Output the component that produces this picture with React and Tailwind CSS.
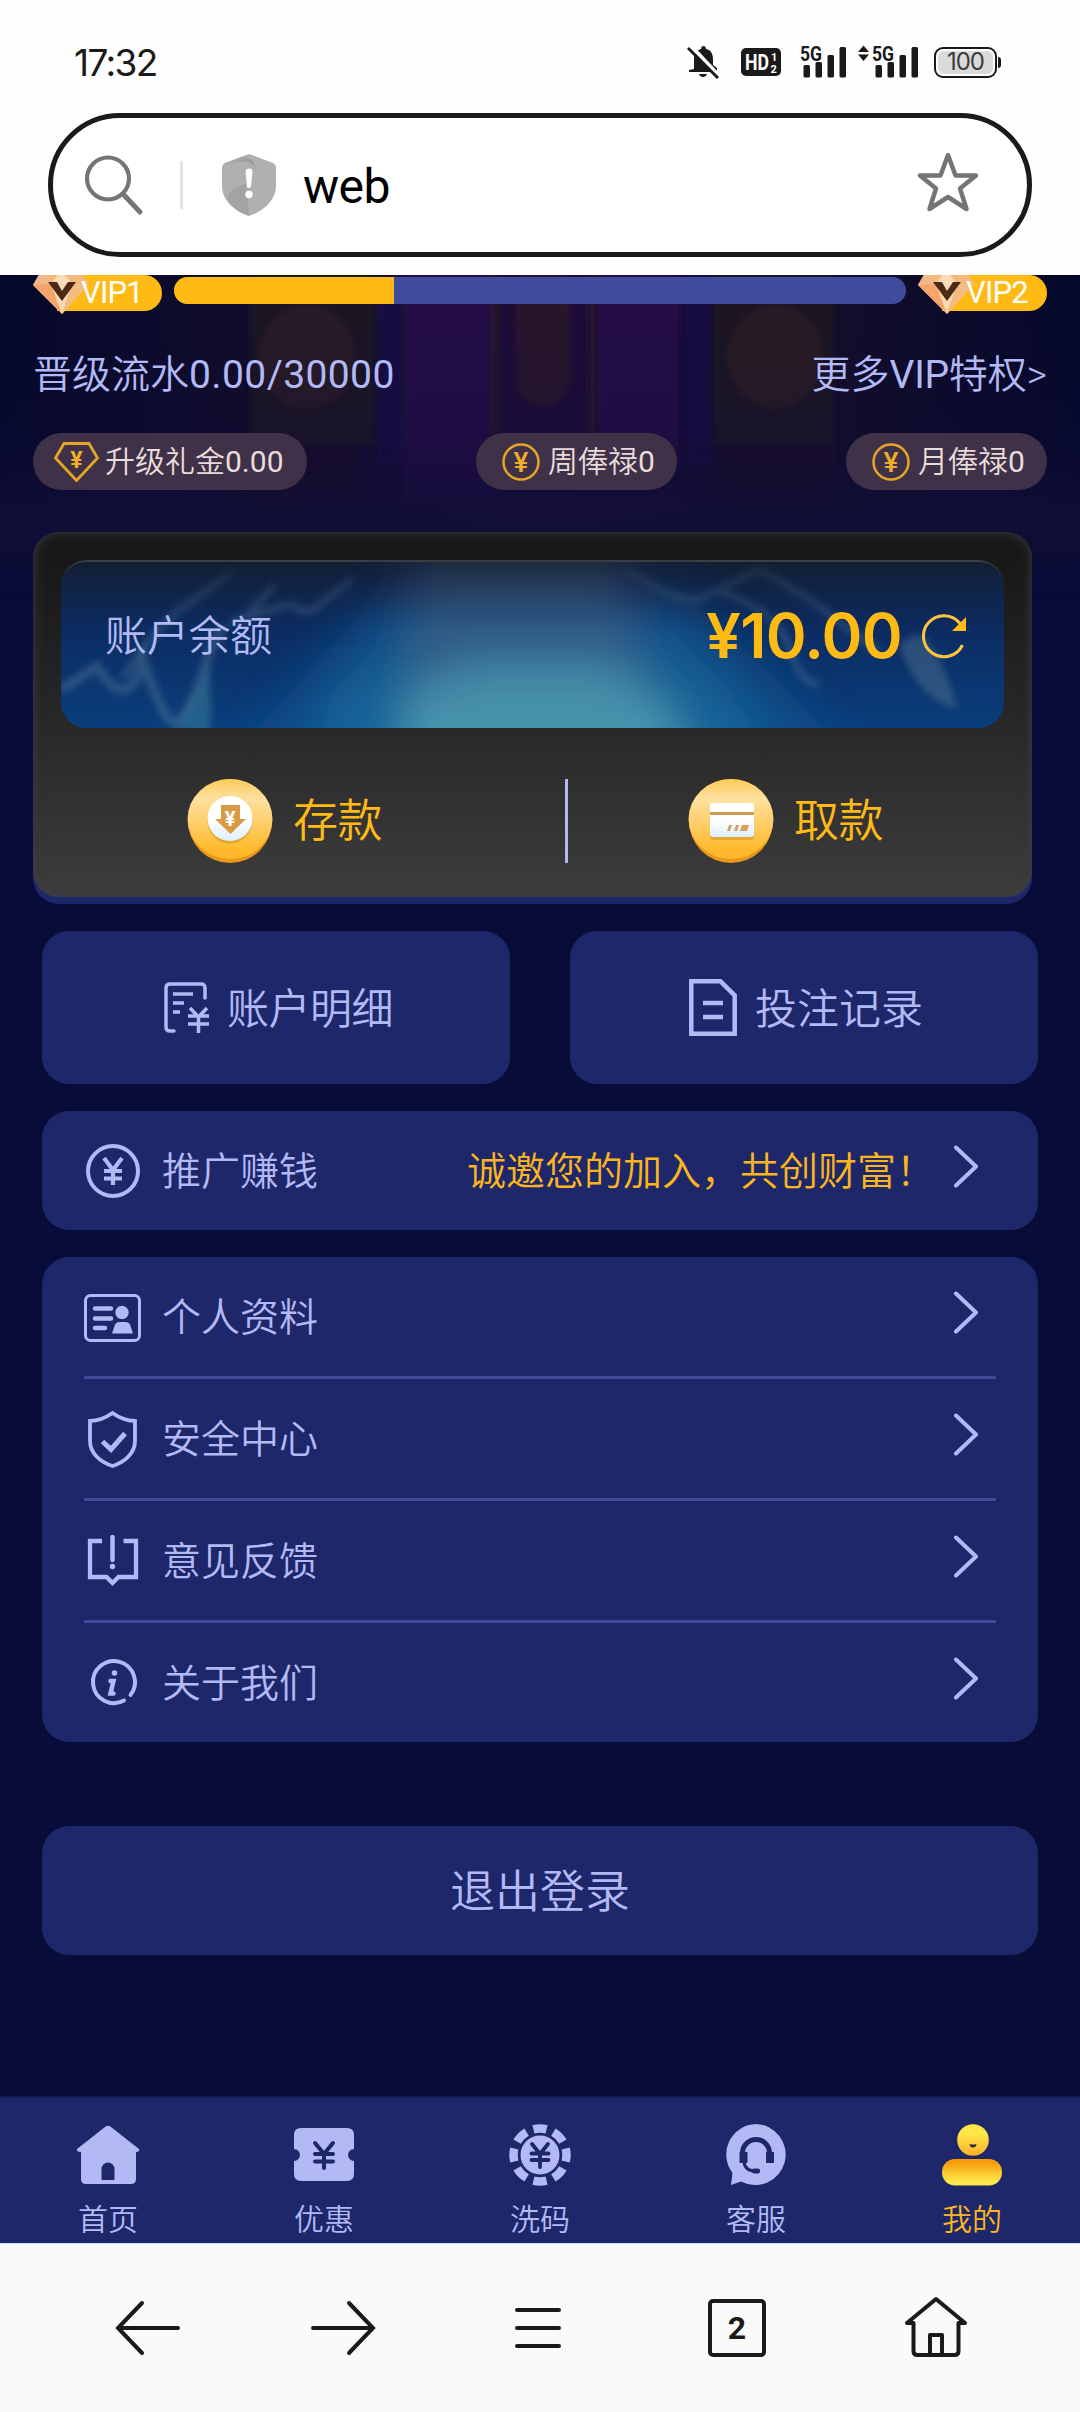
import React from "react";

const Yen = ({ x, y, size, weight = 400, fill = "#b2b9f5" }) => (
  <text x={x} y={y} textAnchor="middle" fontFamily="Roboto, sans-serif" fontSize={size} fontWeight={weight} fill={fill}>
    ¥
  </text>
);

const SignalBars = () => (
  <svg className="overflow-visible" width="48" height="44" viewBox="0 -5 48 44" fill="#1a1a1a">
    <text x="0" y="15.500" textLength="22" lengthAdjust="spacingAndGlyphs" fontFamily="Roboto, sans-serif" fontSize="21" fontWeight="700">5G</text>
    <rect x="3.500" y="20" width="6.500" height="12.500" rx="1.500" />
    <rect x="15.500" y="17" width="6.500" height="15.500" rx="1.500" />
    <rect x="27.500" y="10" width="6.500" height="22.500" rx="1.500" />
    <rect x="39.500" y="2" width="6.500" height="30.500" rx="1.500" />
  </svg>
);

const StatusBar = () => (
  <div className="h-[113px] flex items-start justify-between pl-[74px] pr-[79px] text-[#1a1a1a]">
    <span className="mt-[39px] font-['Inter'] text-[37px] leading-[48px] tracking-[-1.6px]">17:32</span>
    <div className="mt-[45px] h-[34px] flex items-center">
      <svg className="w-[32px]" height="34" viewBox="0 0 32 34">
        <path d="M7 24V14c0-5 3-9 7-10 0-4 5-4 5 0 5 1 7 5 7 10v6l4 3v4H2v-2z" fill="#1a1a1a" />
        <path d="M12 29h8c-1 4-7 4-8 0z" fill="#1a1a1a" />
        <path d="M4 1l28 30" stroke="#fefefe" strokeWidth="4" />
        <path d="M1 3l30 30" stroke="#1a1a1a" strokeWidth="3" />
      </svg>
      <svg className="ml-[22px]" width="40" height="28" viewBox="0 0 40 28">
        <rect width="40" height="28" rx="5" fill="#1a1a1a" />
        <g fill="#fff" fontFamily="Roboto, sans-serif" fontWeight="700">
          <text x="4" y="22" fontSize="22" textLength="24" lengthAdjust="spacingAndGlyphs">HD</text>
          <text x="30" y="12.500" fontSize="11">1</text>
          <text x="29.500" y="25" fontSize="11">2</text>
        </g>
      </svg>
      <div className="ml-[19px] flex"><SignalBars /></div>
      <svg className="ml-[10px]" width="11" height="34" viewBox="0 0 11 34" fill="#1a1a1a">
        <path d="M0 7l5.500-6.500L11 7zM0 9.500h11L5.500 16z" />
      </svg>
      <div className="ml-[3px] flex"><SignalBars /></div>
      <div className="ml-[14px] w-[63px] h-[31px] rounded-[9px] border-2 border-[#1a1a1a] p-[2px] flex">
        <div className="flex-1 rounded-[6px] bg-[#dadada] flex items-center justify-center font-['Inter'] text-[24px] leading-none tracking-[-1px] text-[#3c3c3c]">
          100
        </div>
      </div>
      <div className="ml-[1px] w-[3px] h-[11px] rounded-r bg-[#1a1a1a]"></div>
    </div>
  </div>
);

const UrlBar = () => (
  <div className="mx-[48px] h-[144px] rounded-full border-[5px] border-[#1a1a1a] bg-white flex items-center pl-[31px] pr-[48px]">
    <svg width="60" height="62" viewBox="0 0 60 62" fill="none" stroke="#757575" strokeWidth="4.200" strokeLinecap="round">
      <circle cx="24" cy="24.500" r="21" />
      <path d="M39 40l17 18" strokeWidth="5" />
    </svg>
    <div className="ml-[36px] w-[3px] h-[48px] bg-[#e4e4e4]"></div>
    <svg className="ml-[39px]" width="54" height="62" viewBox="0 0 54 62">
      <defs>
        <linearGradient id="sh1" x1="0" y1="0" x2="1" y2="0.300">
          <stop offset="0" stopColor="#b4b4b4" />
          <stop offset="1" stopColor="#989898" />
        </linearGradient>
      </defs>
      <path d="M24 1q3-1.500 6 0l21 8q3 1.500 3 5v18c0 14-12 25-27 30C12 57 0 46 0 32V14q0-3.500 3-5z" fill="#b0b0b0" />
      <path d="M3 9l18-6q11 0 12 11-4-8-16-6-10 2-16 5z" fill="url(#sh1)" />
      <path d="M5 45q5-14 19-15l3 32Q12 57 5 45z" fill="#a3a3a3" />
      <path d="M23.500 18a3.500 3.500 0 0 1 7 0l-1.500 14a2 2 0 0 1-4 0z" fill="#fff" />
      <circle cx="27" cy="40.500" r="3.700" fill="#fff" />
    </svg>
    <span className="ml-[27px] pt-[3px] flex-1 text-[48px] leading-[60px] tracking-[-0.5px] text-black">web</span>
    <svg className="-mt-[6px]" width="62" height="62" viewBox="0 0 62 62" fill="none" stroke="#757575" strokeWidth="4.500" strokeLinejoin="round">
      <path d="M31 4l7.500 20.500H59L43 37.500 49.500 58 31 46 12.500 58 19 37.500 3 24.500h20.500z" />
    </svg>
  </div>
);

const VipBadge = ({ label }) => (
  <div className="w-[129px] h-[36px] relative pl-[24px]">
    <div className="h-full rounded-r-full bg-[#ffba14] pl-[24px]">
      <span className="relative z-10 block font-normal text-[31px] leading-[36px] tracking-[-0.8px] text-white">{label}</span>
    </div>
    <svg className="absolute left-0 top-0" width="57" height="39" viewBox="0 0 57 39">
      <path d="M9-5h38l9 14-27 30L0 10z" fill="#f3b97e" />
      <path d="M8-4l10 13L0 10z" fill="#f0b98a" />
      <path d="M18 9L28-5l11 14z" fill="#fbdcb8" />
      <path d="M18 9L0 10l29 29z" fill="#f5a56a" />
      <path d="M18 9h21L29 39z" fill="#fbd9ae" />
      <path d="M39 9h17L29 39z" fill="#f1bd80" />
      <path d="M15 7h9l5 9 6-9h8L29 26z" fill="#4b2a18" />
    </svg>
  </div>
);

const Chip = ({ icon, label, amount }) => (
  <div className="h-[57px] rounded-full bg-[#3f3147] flex items-center">
    {icon}
    <span className="text-[30px] leading-[40px] text-[#e9dcdc]">
      {label}
      <span className="font-normal">{amount}</span>
    </span>
  </div>
);

const YenRing = () => (
  <svg className="ml-[26px] mr-[8px]" width="38" height="38" viewBox="0 0 38 38">
    <circle cx="19" cy="19" r="17.500" fill="none" stroke="#e5a526" strokeWidth="2.500" />
    <Yen x="19" y="29" size="28" weight={500} fill="#eeae28" />
  </svg>
);

const YenGem = () => (
  <svg className="ml-[21px] mr-[6px]" width="45" height="40" viewBox="0 0 45 40">
    <path d="M10 1.500h25L43.500 16 22.500 38.500 1.500 16z" fill="none" stroke="#e5a526" strokeWidth="2.800" />
    <Yen x="22.500" y="25.500" size="23" weight={700} fill="#eeae28" />
  </svg>
);

// faint hall scenery behind the vip header
const HeaderBackdrop = () => (
  <svg className="absolute left-0 top-0" width="1080" height="330" viewBox="0 0 1080 330">
    <defs>
      <linearGradient id="bgFade" x1="0" y1="0" x2="0" y2="1">
        <stop offset="0" stopColor="#070b33" stopOpacity="0" />
        <stop offset="0.450" stopColor="#0d0c36" stopOpacity="0.250" />
        <stop offset="0.750" stopColor="#110f37" stopOpacity="0.900" />
        <stop offset="1" stopColor="#070b38" stopOpacity="1" />
      </linearGradient>
      <linearGradient id="bgSide" x1="0" y1="0" x2="1" y2="0">
        <stop offset="0" stopColor="#05082b" />
        <stop offset="0.250" stopColor="#130d2c" />
        <stop offset="0.500" stopColor="#1e0d3c" />
        <stop offset="0.750" stopColor="#150e2a" />
        <stop offset="1" stopColor="#05082b" />
      </linearGradient>
      <filter id="haze"><feGaussianBlur stdDeviation="3" /></filter>
    </defs>
    <rect width="1080" height="330" fill="url(#bgSide)" />
    <g filter="url(#haze)">
      <rect x="250" y="-10" width="125" height="180" fill="#1d1222" />
      <ellipse cx="307" cy="82" rx="48" ry="52" fill="#291a25" />
      <rect x="378" y="-10" width="24" height="200" fill="#130a44" />
      <rect x="405" y="-10" width="90" height="240" fill="#25084a" />
      <rect x="490" y="-10" width="10" height="200" fill="#281228" />
      <rect x="516" y="-10" width="54" height="142" rx="26" fill="#2a1629" />
      <rect x="588" y="-10" width="8" height="200" fill="#2a1229" />
      <rect x="598" y="-10" width="80" height="200" fill="#25084a" />
      <rect x="686" y="-10" width="24" height="200" fill="#130a44" />
      <rect x="712" y="-10" width="122" height="180" fill="#1d1222" />
      <ellipse cx="775" cy="82" rx="48" ry="52" fill="#291c24" />
      <rect x="250" y="170" width="110" height="60" fill="#1a1026" />
      <rect x="720" y="170" width="115" height="60" fill="#1a1026" />
    </g>
    <rect width="1080" height="330" fill="url(#bgFade)" />
  </svg>
);

const BalancePanel = () => (
  <div className="relative h-[168px] rounded-[26px] overflow-hidden border-t-2 border-[#3a3d42] bg-[#0a3470]">
    <svg className="absolute inset-0" width="943" height="168" viewBox="0 0 943 168" preserveAspectRatio="none">
      <defs>
        <linearGradient id="pBase" x1="0" y1="0" x2="0" y2="1">
          <stop offset="0" stopColor="#0a1a42" />
          <stop offset="0.500" stopColor="#0a2f69" />
          <stop offset="1" stopColor="#0a3f7c" />
        </linearGradient>
        <linearGradient id="pTop" x1="0" y1="0" x2="0" y2="1">
          <stop offset="0" stopColor="#17202e" stopOpacity="0.700" />
          <stop offset="0.400" stopColor="#15305c" stopOpacity="0.150" />
          <stop offset="1" stopColor="#15305c" stopOpacity="0" />
        </linearGradient>
        <filter id="soft" x="-20%" y="-50%" width="140%" height="200%"><feGaussianBlur stdDeviation="3.500" /></filter>
        <filter id="softer" x="-50%" y="-50%" width="200%" height="200%"><feGaussianBlur stdDeviation="20" /></filter>
      </defs>
      <rect width="943" height="168" fill="url(#pBase)" />
      <g filter="url(#softer)">
        <path d="M160 210l70-80 90-100h300l90 80 90 100z" fill="#0d4f8a" opacity="0.900" />
        <path d="M250 210l20-80 70-60h270l60 60 50 80z" fill="#14699c" opacity="0.850" />
        <path d="M350 210V-20h210l20 130 30 100z" fill="#46688a" opacity="0.650" />
        <path d="M335 210l10-80 70-30h130l60 40 30 70z" fill="#4898b0" opacity="0.900" />
      </g>
      <g fill="none" stroke="#52789a" strokeOpacity="0.500" filter="url(#soft)">
        <path d="M0 128l36-24q14 24 26 24 14-2 20-30 20 60 32 64 16-10 34-70l14-28" strokeWidth="9" />
        <path d="M62 116q40-60 60-70l48-36" strokeWidth="6" />
        <path d="M180 60l34-38M170 60q30-10 60-18 14 12 24 4l38-30" strokeWidth="7" />
        <path d="M564 6q50 34 72 32 40-20 62-30 40 20 70 44l50 38" strokeWidth="6" />
        <path d="M660 30q60 20 70 60 10 32 28 32" strokeWidth="6" />
      </g>
      <path d="M838 84q20 56 58 62-14-52-34-72-12-4-24 10z" fill="#4a6c8c" opacity="0.600" filter="url(#soft)" />
      <path d="M114 168q16-20 34-68 4 50 0 74z" fill="#3d86a0" opacity="0.500" filter="url(#soft)" />
      <rect width="943" height="168" fill="url(#pTop)" />
    </svg>
    <div className="relative h-full flex items-center pl-[44px] pr-[37px] pb-[18px]">
      <span className="flex-1 pt-[2px] text-[42px] leading-[50px] tracking-[-0.3px] text-[#b2b9f5]">账户余额</span>
      <span className="font-['Inter'] font-semibold text-[62px] leading-[60px] tracking-[-0.7px] text-[#ffba14]">¥10.00</span>
      <svg className="ml-[19px]" width="46" height="46" viewBox="0 0 46 46">
        <path d="M41.500 32A20.500 20.500 0 1 1 39 10.500" fill="none" stroke="#ffc53a" strokeWidth="3" />
        <path d="M45 4v14H31z" fill="#ffba14" />
      </svg>
    </div>
  </div>
);

const Coin = ({ children }) => (
  <svg width="86" height="84" viewBox="0 0 86 84">
    <defs>
      <linearGradient id="coin" x1="0" y1="0" x2="0" y2="1">
        <stop offset="0" stopColor="#fdcb5a" />
        <stop offset="0.250" stopColor="#fde0a0" />
        <stop offset="0.900" stopColor="#ffb928" />
      </linearGradient>
      <linearGradient id="coinFace" x1="0" y1="0" x2="0" y2="1">
        <stop offset="0.500" stopColor="#ffffff" />
        <stop offset="1" stopColor="#dcefff" />
      </linearGradient>
    </defs>
    <circle cx="43" cy="42" r="42" fill="#e8981c" />
    <ellipse cx="43" cy="40" rx="42.500" ry="40" fill="url(#coin)" />
    {children}
  </svg>
);

const DepositIcon = () => (
  <Coin>
    <circle cx="43" cy="42" r="22.500" fill="#d9921f" opacity="0.600" />
    <circle cx="43" cy="39.500" r="22.500" fill="url(#coinFace)" />
    <path d="M34 26h19v14h6L43.500 55 28 40h6z" fill="#d89a45" />
    <Yen x="43" y="47" size="20" weight={700} fill="#fff" />
  </Coin>
);

const WithdrawIcon = () => (
  <Coin>
    <rect x="22" y="27" width="44" height="34" rx="4" fill="#d9921f" opacity="0.600" />
    <rect x="22" y="24" width="44" height="34" rx="3" fill="url(#coinFace)" />
    <rect x="22" y="33" width="44" height="3" fill="#cf9a50" />
    <path d="M41 46h3l-2 6h-3zM48 46h3l-2 6h-3zM54 46h7l-2 6h-7z" fill="#d9a05a" />
  </Coin>
);

const WalletCard = () => (
  <div className="ml-[33px] w-[999px] h-[372px] rounded-[26px] bg-[#1d276a]">
    <div className="h-[365px] rounded-[26px] px-[28px] pt-[28px] bg-linear-to-b from-[#161616] via-[#272727] to-[#3d3d3d] shadow-[inset_0_0_12px_#3c3e44]">
      <BalancePanel />
      <div className="h-[169px] mt-[8px] flex items-center">
        <div className="w-[504px] flex items-center pl-[126px]">
          <DepositIcon />
          <span className="ml-[20px] pt-[2px] text-[45px] leading-[50px] tracking-[-0.5px] text-[#ffba14]">存款</span>
        </div>
        <div className="w-[3px] h-[84px] bg-[#b2b9f5]"></div>
        <div className="flex-1 flex items-center pl-[120px]">
          <WithdrawIcon />
          <span className="ml-[20px] pt-[2px] text-[45px] leading-[50px] tracking-[-0.5px] text-[#ffba14]">取款</span>
        </div>
      </div>
    </div>
  </div>
);

const BillIcon = () => (
  <svg width="46" height="52" viewBox="0 0 46 52" fill="none" stroke="#b2b9f5" strokeWidth="3.500" strokeLinecap="round">
    <path d="M41 16V6q0-4-4-4H6Q2 2 2 6v39q0 4 4 4h4" />
    <path d="M9 12h20M9 21h11M9 30h7" strokeLinecap="butt" />
    <path d="M26 26l8.500 9L43 26M34.500 35v16M24 34h21M24 42h21" strokeLinecap="butt" />
  </svg>
);

const RecordIcon = () => (
  <svg width="48" height="57" viewBox="0 0 48 57" fill="none" stroke="#b2b9f5" strokeWidth="4.500">
    <path d="M2.300 2.300h29.200l14.200 14.200v38.200H2.300z" />
    <path d="M14 24h20M14 38h20" />
  </svg>
);

const PromoIcon = () => (
  <svg width="56" height="56" viewBox="0 0 56 56">
    <circle cx="28" cy="28" r="25" fill="none" stroke="#b2b9f5" strokeWidth="4" />
    <path d="M19 15l9 12 9-12M28 27v15M19 28h18M19 35.500h18" fill="none" stroke="#b2b9f5" strokeWidth="4.200" />
  </svg>
);

const ProfileIcon = () => (
  <svg width="57" height="56" viewBox="0 0 57 56">
    <rect x="1.500" y="6.500" width="54" height="45" rx="5" fill="none" stroke="#b2b9f5" strokeWidth="3" />
    <path d="M11 19.500h16M11 29.500h16M11 39h10" stroke="#b2b9f5" strokeWidth="4.500" strokeLinecap="round" />
    <circle cx="38" cy="23.500" r="6.700" fill="#b2b9f5" />
    <path d="M28 44.500l3-9q1-2.500 4-2.500h7q3 0 4 2.500l3 9z" fill="#b2b9f5" />
  </svg>
);

const SafeIcon = () => (
  <svg width="57" height="58" viewBox="0 0 57 58" fill="none" stroke="#b2b9f5" strokeWidth="3.800">
    <path d="M28.500 3Q18 10.500 6 11v20c0 12 10 21 22.500 25C41 52 51 43 51 31V11Q39 10.500 28.500 3z" />
    <path d="M18.500 31.500l8.500 8 14-16" strokeWidth="5" />
  </svg>
);

const FeedbackIcon = () => (
  <svg width="57" height="56" viewBox="0 0 57 56" fill="none" stroke="#b2b9f5" strokeWidth="4.300">
    <path d="M18 8H6v36h16.500l6 6 6-6H52V8H39.500" />
    <path d="M28.500 4v23" strokeWidth="4.500" strokeLinecap="round" />
    <circle cx="28.500" cy="33.500" r="2.700" fill="#b2b9f5" stroke="none" />
  </svg>
);

const AboutIcon = () => (
  <svg width="57" height="56" viewBox="0 0 57 56" fill="none" stroke="#b2b9f5" strokeWidth="4" strokeLinecap="round">
    <path d="M40 45.500A21 21 0 1 1 46.500 40" />
    <circle cx="30.500" cy="18" r="2.800" fill="#b2b9f5" stroke="none" />
    <path d="M26.500 26h3l-3 12.500h3" strokeWidth="4.500" />
  </svg>
);

const Chevron = () => (
  <svg className="-mt-[8px]" width="26" height="43" viewBox="0 0 26 43" fill="none" stroke="#b2b9f5" strokeWidth="4" strokeLinecap="round" strokeLinejoin="round">
    <path d="M3 2.500l20 19-20 19" />
  </svg>
);

const MenuRow = ({ icon, label, note }) => (
  <div className="h-[119px] flex items-center pr-[17px]">
    <div className="w-[57px] flex justify-center">{icon}</div>
    <span className="ml-[21px] pt-[3px] flex-1 text-[39px] leading-[50px] text-[#b2b9f5]">{label}</span>
    {note && <span className="mr-[18px] pt-[3px] text-[39px] leading-[50px] text-[#fcb61c]">{note}</span>}
    <Chevron />
  </div>
);

const menu = [
  { label: "个人资料", icon: <ProfileIcon /> },
  { label: "安全中心", icon: <SafeIcon /> },
  { label: "意见反馈", icon: <FeedbackIcon /> },
  { label: "关于我们", icon: <AboutIcon /> },
];

const HomeTabIcon = () => (
  <svg width="64" height="62" viewBox="0 0 64 62">
    <path d="M29 3q3-2.500 6 0l28 22q1 3-3 3v27q0 5-5 5H10q-5 0-5-5V28q-5 0-4-3z" fill="#b2b9f5" />
    <path d="M25.500 56V45a6.500 6.500 0 0 1 13 0v11z" fill="#1d276a" />
  </svg>
);

const CouponTabIcon = () => (
  <svg width="62" height="62" viewBox="0 0 62 62">
    <path d="M8 4h46q7 0 7 7v14a6 6 0 0 0 0 12v13q0 7-7 7H8q-7 0-7-7V37a6 6 0 0 0 0-12V11q0-7 7-7z" fill="#b2b9f5" />
    <path d="M22 19l9 11 9-11M31 30v14M22 30h18M22 37.500h18" fill="none" stroke="#1d276a" strokeWidth="4" strokeLinecap="round" />
  </svg>
);

const TokenTabIcon = () => (
  <svg width="62" height="62" viewBox="0 0 62 62">
    <circle cx="31" cy="31" r="26.500" fill="none" stroke="#b2b9f5" strokeWidth="8.500" strokeDasharray="13 7" strokeDashoffset="6.500" pathLength="160" />
    <circle cx="31" cy="31" r="19.500" fill="#b2b9f5" />
    <path d="M23 20l8 10 8-10M31 30v13M22.500 29.500h17M22.500 36h17" fill="none" stroke="#1d276a" strokeWidth="3.800" strokeLinecap="round" />
  </svg>
);

const ServiceTabIcon = () => (
  <svg width="62" height="62" viewBox="0 0 62 62">
    <path d="M31 0a30.500 30.500 0 1 1-15 57.500L6 61l1.500-12A30.500 30.500 0 0 1 31 0z" fill="#b2b9f5" />
    <path d="M17.500 31v-2a13.500 13.500 0 0 1 27 0v2" fill="none" stroke="#1d276a" strokeWidth="5" />
    <rect x="14.500" y="28" width="8" height="11" rx="1" fill="#1d276a" />
    <rect x="41" y="28" width="8" height="11" rx="1" fill="#1d276a" />
    <path d="M19 38q1 9 12 9" fill="none" stroke="#1d276a" strokeWidth="3" />
    <rect x="27" y="44.500" width="8" height="5" rx="2" fill="#1d276a" />
  </svg>
);

const MineTabIcon = () => (
  <svg width="62" height="62" viewBox="0 0 62 62">
    <defs>
      <linearGradient id="mHead" x1="0" y1="0" x2="0" y2="1">
        <stop offset="0.300" stopColor="#ffe74a" />
        <stop offset="1" stopColor="#f9b024" />
      </linearGradient>
      <linearGradient id="mBody" x1="0" y1="0" x2="0" y2="1">
        <stop offset="0.100" stopColor="#f79a08" />
        <stop offset="0.850" stopColor="#ffe74a" />
      </linearGradient>
    </defs>
    <circle cx="32" cy="16" r="15.800" fill="url(#mHead)" />
    <path d="M28.500 20q3.500 1 7 0-.5 3.500-3.500 3.500t-3.500-3.500z" fill="#2a2a4a" />
    <rect x="1" y="35" width="60" height="26.500" rx="13" fill="url(#mBody)" />
  </svg>
);

const tabs = [
  { label: "首页", icon: <HomeTabIcon /> },
  { label: "优惠", icon: <CouponTabIcon /> },
  { label: "洗码", icon: <TokenTabIcon /> },
  { label: "客服", icon: <ServiceTabIcon /> },
  { label: "我的", icon: <MineTabIcon />, active: true },
];

const BrowserNav = () => (
  <div className="h-[169px] shrink-0 bg-[#fafafa] border-t border-[#d5dcf3] flex items-center pl-[115px]">
    <svg width="66" height="56" viewBox="0 0 66 56" fill="none" stroke="#1a1a1a" strokeWidth="4" strokeLinecap="round">
      <path d="M63 28H3M27 3L3 28l24 25" />
    </svg>
    <svg className="ml-[129px]" width="66" height="56" viewBox="0 0 66 56" fill="none" stroke="#1a1a1a" strokeWidth="4" strokeLinecap="round">
      <path d="M3 28h60M39 3l24 25-24 25" />
    </svg>
    <svg className="ml-[138px]" width="48" height="42" viewBox="0 0 48 42" fill="none" stroke="#1a1a1a" strokeWidth="4" strokeLinecap="round">
      <path d="M3 3h42M3 21h42M3 39h42" />
    </svg>
    <div className="ml-[146px] w-[58px] h-[58px] rounded-[5px] border-4 border-[#1a1a1a] flex items-center justify-center font-[Roboto] text-[32px] leading-none font-bold text-[#1a1a1a]">
      2
    </div>
    <svg className="ml-[138px] -mt-[2px]" width="64" height="62" viewBox="0 0 64 62" fill="none" stroke="#1a1a1a" strokeWidth="4" strokeLinejoin="round">
      <path d="M32 3L3 27h6.500v28q0 4 4 4h37q4 0 4-4V27H61z" />
      <path d="M26 59V39h12v20" />
    </svg>
  </div>
);

export default function App() {
  return (
    <div className="w-[1080px] h-[2412px] overflow-hidden flex flex-col bg-[#fefefe] font-[Roboto,'Noto_Sans_CJK_SC',sans-serif]">
      <StatusBar />
      <UrlBar />
      <div className="h-[18px] shrink-0"></div>

      <div className="relative h-[1821px] shrink-0 bg-[#070c38] overflow-hidden font-[350]">
        <HeaderBackdrop />
        <div className="relative">
          {/* vip progress */}
          <div className="h-[40px] px-[33px] flex items-start justify-between">
            <VipBadge label="VIP1" />
            <div className="mt-[2px] w-[732px] h-[27px] rounded-full bg-[#3f4c9c] overflow-hidden">
              <div className="w-[220px] h-full bg-[#ffba14]"></div>
            </div>
            <VipBadge label="VIP2" />
          </div>
          <div className="h-[118px] px-[33px] pt-[2px] flex items-center justify-between text-[39px] leading-[50px] text-[#b2b9f5]">
            <span>
              晋级流水<span className="font-normal tracking-[0.4px]">0.00/30000</span>
            </span>
            <span>
              更多<span className="font-normal tracking-[-0.3px]">VIP</span>特权&gt;
            </span>
          </div>
          <div className="px-[33px] grid grid-cols-[274px_201px_201px] justify-between">
            <Chip icon={<YenGem />} label="升级礼金" amount="0.00" />
            <Chip icon={<YenRing />} label="周俸禄" amount="0" />
            <Chip icon={<YenRing />} label="月俸禄" amount="0" />
          </div>

          <div className="h-[42px]"></div>
          <WalletCard />

          <div className="px-[42px] pt-[27px] flex flex-col gap-[27px]">
            <div className="grid grid-cols-2 gap-[60px] text-[42px] leading-[50px] text-[#b2b9f5]">
              <div className="h-[153px] rounded-[27px] bg-[#1d276a] flex items-center pl-[122px] gap-[17px]">
                <BillIcon />
                <span className="pt-[4px] tracking-[-0.5px]">账户明细</span>
              </div>
              <div className="h-[153px] rounded-[27px] bg-[#1d276a] flex items-center pl-[119px] gap-[18px]">
                <RecordIcon />
                <span className="pt-[4px]">投注记录</span>
              </div>
            </div>
            <div className="rounded-[27px] bg-[#1d276a] px-[42px]">
              <MenuRow icon={<PromoIcon />} label="推广赚钱" note="诚邀您的加入，共创财富！" />
            </div>
            <div className="rounded-[27px] bg-[#1d276a] px-[42px] divide-y-[3px] divide-[#3f4c9c]">
              {menu.map((item) => (
                <div key={item.label}>
                  <MenuRow icon={item.icon} label={item.label} />
                </div>
              ))}
            </div>
          </div>

          <button className="block mx-[42px] mt-[84px] w-[996px] h-[129px] pt-[4px] rounded-[27px] bg-[#1d276a] text-[45px] text-[#b2b9f5]">
            退出登录
          </button>
        </div>
      </div>

      <div className="h-[147px] shrink-0 grid grid-cols-5 bg-[#1d276a] border-t-2 border-[#151c55] font-[350]">
        {tabs.map((tab) => (
          <div key={tab.label} className="flex flex-col items-center pt-[26px]">
            {tab.icon}
            <span className={tab.active ? "mt-[14px] text-[30px] leading-[40px] text-[#fcb61c]" : "mt-[14px] text-[30px] leading-[40px] text-[#b2b9f5]"}>
              {tab.label}
            </span>
          </div>
        ))}
      </div>
      <BrowserNav />
    </div>
  );
}
